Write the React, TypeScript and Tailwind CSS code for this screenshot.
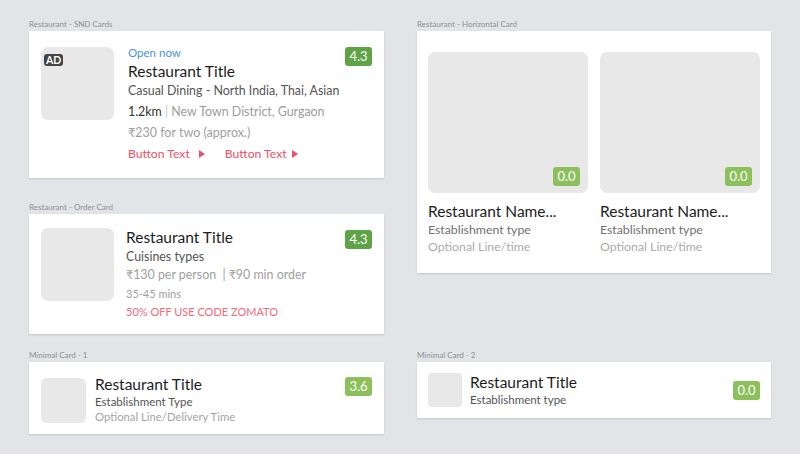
import React from "react";

const Rating = ({ value, dark }: { value: string; dark?: boolean }) => (
  <div
    className={`flex h-[19px] w-[27px] items-center justify-center rounded-[3px] text-[13px] leading-none text-white ${
      dark ? "bg-[#5ea346]" : "bg-[#8cc05a]"
    }`}
  >
    {value}
  </div>
);

const Label = ({ children }: { children: React.ReactNode }) => (
  <div className="h-[11px] text-[8px] leading-[9px] text-[#8d8e92]">{children}</div>
);

const Tri = () => (
  <svg width="6" height="8" viewBox="0 0 6 8" className="inline-block">
    <path d="M0 0 L6 4 L0 8 Z" fill="#ef4f67" />
  </svg>
);

const Card = ({ className, children }: { className?: string; children: React.ReactNode }) => (
  <div className={`bg-white shadow-[0_1px_2px_rgba(0,0,0,0.14)] ${className ?? ""}`}>{children}</div>
);

const Thumb = ({ className }: { className: string }) => (
  <div className={`shrink-0 bg-[#e8e8e8] ${className}`} />
);

export default function App() {
  return (
    <div
      className="flex h-[454px] w-[800px] gap-[33px] bg-[#e3e4e8] pl-[29px] pt-[20px]"
      style={{ fontFamily: "Lato, 'Open Sans', sans-serif" }}
    >
      {/* Left column */}
      <div className="flex w-[355px] flex-col">
        <Label>Restaurant - SND Cards</Label>
        <Card className="flex h-[147px] pl-[12px] pr-[12px] pt-[16px]">
          <div className="relative">
            <Thumb className="h-[73px] w-[73px] rounded-[7px]" />
            <div className="absolute left-[3px] top-[7px] flex h-[12px] items-center rounded-[3px] bg-[#444] px-[2px] text-[10.5px] font-bold leading-none text-white">
              AD
            </div>
          </div>
          <div className="-mt-[3px] ml-[14px] flex-1">
            <div className="text-[11.5px] leading-[17px] text-[#4a93e4]">Open now</div>
            <div className="text-[15.5px] leading-[20px] text-[#1c1c1c]">Restaurant Title</div>
            <div className="text-[12.4px] leading-[20px] text-[#545454]">Casual Dining - North India, Thai, Asian</div>
            <div className="text-[12.4px] leading-[21px] text-[#9c9c9c]">
              <span className="text-[#333]">1.2km</span> <span className="text-[#c8c8c8]">|</span> New Town District, Gurgaon
            </div>
            <div className="text-[12.5px] leading-[21px] text-[#a0a0a0]">₹230 for two (approx.)</div>
            <div className="flex items-center text-[12.2px] leading-[22px] text-[#ef4f67]">
              <span>Button Text</span>
              <span className="ml-[9px] flex items-center"><Tri /></span>
              <span className="ml-[20px]">Button Text</span>
              <span className="ml-[5px] flex items-center"><Tri /></span>
            </div>
          </div>
          <Rating value="4.3" dark />
        </Card>

        <div className="mt-[25px]">
          <Label>Restaurant - Order Card</Label>
          <Card className="flex h-[120px] pl-[12px] pr-[12px] pt-[14px]">
            <Thumb className="h-[73px] w-[73px] rounded-[7px]" />
            <div className="-mt-[1px] ml-[12px] flex-1">
              <div className="text-[15.5px] leading-[21px] text-[#1c1c1c]">Restaurant Title</div>
              <div className="text-[12.4px] leading-[18px] text-[#545454]">Cuisines types</div>
              <div className="text-[12.4px] leading-[18px] text-[#a0a0a0]">₹130 per person&nbsp; | ₹90 min order</div>
              <div className="text-[11px] leading-[19px] text-[#a0a0a0]">35-45 mins</div>
              <div className="text-[11px] leading-[17px] text-[#f36b7c]">50% OFF USE CODE ZOMATO</div>
            </div>
            <div className="mt-[2px]">
              <Rating value="4.3" dark />
            </div>
          </Card>
        </div>

        <div className="mt-[17px]">
          <Label>Minimal Card - 1</Label>
          <Card className="flex h-[72px] pl-[12px] pr-[12px] pt-[16px]">
            <Thumb className="h-[45px] w-[45px] rounded-[6px]" />
            <div className="-mt-[4px] ml-[9px] flex-1">
              <div className="text-[15.5px] leading-[20px] text-[#1c1c1c]">Restaurant Title</div>
              <div className="text-[11.5px] leading-[16px] text-[#545454]">Establishment Type</div>
              <div className="text-[11.3px] leading-[14px] text-[#a5a5a5]">Optional Line/Delivery Time</div>
            </div>
            <div className="-mt-[1px]">
              <Rating value="3.6" />
            </div>
          </Card>
        </div>
      </div>

      {/* Right column */}
      <div className="flex w-[354px] flex-col">
        <Label>Restaurant - Horizontal Card</Label>
        <Card className="flex h-[242px] gap-[12px] pl-[11px] pt-[21px]">
          {[0, 1].map((i) => (
            <div key={i} className="w-[160px]">
              <div className="relative h-[141px] w-[160px] rounded-[7px] bg-[#e8e8e8]">
                <div className="absolute bottom-[7px] right-[8px]">
                  <Rating value="0.0" />
                </div>
              </div>
              <div className="pt-[8px] text-[15.5px] leading-[20px] text-[#1c1c1c]">Restaurant Name...</div>
              <div className="text-[12.3px] leading-[18px] text-[#707070]">Establishment type</div>
              <div className="text-[12.3px] leading-[16px] text-[#ababab]">Optional Line/time</div>
            </div>
          ))}
        </Card>

        <div className="mt-[78px]">
          <Label>Minimal Card - 2</Label>
          <Card className="flex h-[56px] items-center pl-[11px] pr-[11px]">
            <Thumb className="h-[34px] w-[34px] rounded-[4px]" />
            <div className="ml-[8px] flex-1">
              <div className="text-[15.5px] leading-[20px] text-[#1c1c1c]">Restaurant Title</div>
              <div className="text-[11.5px] leading-[16px] text-[#545454]">Establishment type</div>
            </div>
            <Rating value="0.0" />
          </Card>
        </div>
      </div>
    </div>
  );
}
